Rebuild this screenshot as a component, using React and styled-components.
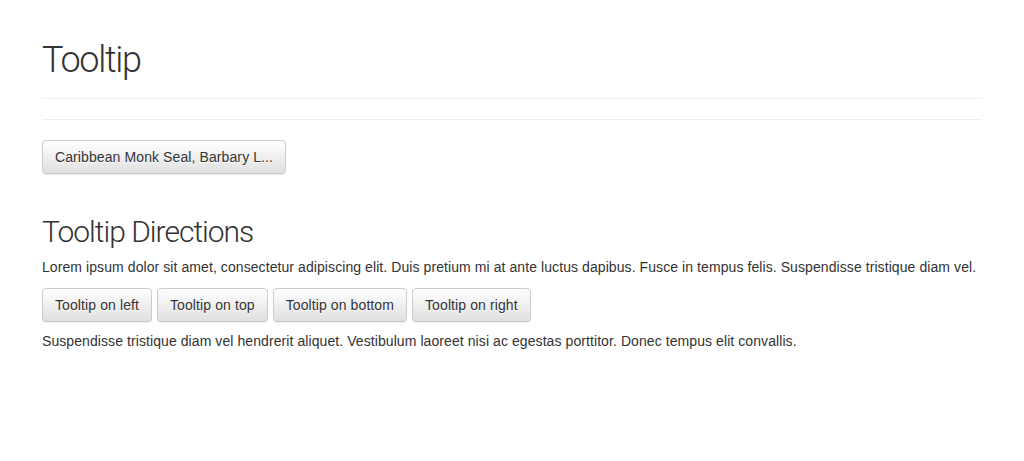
import React from 'react'
import styled, { createGlobalStyle } from 'styled-components'

const GlobalStyle = createGlobalStyle`
  html, body {
    margin: 0;
    background: #fff;
  }
  body {
    font-family: "Liberation Sans", Arial, sans-serif;
    font-size: 14px;
    line-height: 1.42857;
    letter-spacing: 0.08px;
    color: #333;
  }
`

const Container = styled.div`
  padding: 0 42px;
`

const PageHeader = styled.div`
  margin-top: 41px;
  padding-bottom: 17px;
  border-bottom: 1px solid #eee;
`

const Title = styled.h1`
  margin: 0;
  font-family: Roboto, "Liberation Sans", sans-serif;
  font-weight: 300;
  font-size: 36px;
  line-height: 1.1;
  letter-spacing: -1.3px;
  color: #333;
`

const Rule = styled.hr`
  margin: 20px 0;
  border: 0;
  border-top: 1px solid #eee;
`

const SubTitle = styled.h2`
  margin: ${props => props.top || 0}px 0 10px;
  font-family: Roboto, "Liberation Sans", sans-serif;
  font-weight: 300;
  font-size: 30px;
  line-height: 1.1;
  letter-spacing: -1px;
  color: #333;
`

const Text = styled.p`
  margin: 0 0 10px;
`

const ButtonRow = styled.div`
  display: flex;
  gap: 5px;
  margin-bottom: 10px;
`

const Button = styled.button`
  display: inline-block;
  box-sizing: border-box;
  height: 34px;
  padding: 6px 12px;
  font-family: "Liberation Sans", Arial, sans-serif;
  font-size: 14px;
  line-height: 20px;
  letter-spacing: 0.1px;
  color: #333;
  text-shadow: 0 1px 0 #fff;
  background-image: linear-gradient(to bottom, #fff 0, #e0e0e0 100%);
  border: 1px solid #ccc;
  border-radius: 4px;
  box-shadow: inset 0 1px 0 rgba(255, 255, 255, .15), 0 1px 1px rgba(0, 0, 0, .075);
  cursor: pointer;
  white-space: nowrap;
`

const directions = ['left', 'top', 'bottom', 'right']

const App = () => (
  <Container>
    <GlobalStyle />
    <PageHeader>
      <Title>Tooltip</Title>
    </PageHeader>
    <Rule />
    <Button title='Caribbean Monk Seal, Barbary Lion, Bali Tiger'>Caribbean Monk Seal, Barbary L...</Button>

    <SubTitle top={41}>Tooltip Directions</SubTitle>
    <Text>
      Lorem ipsum dolor sit amet, consectetur adipiscing elit. Duis pretium mi at ante luctus dapibus. Fusce in tempus felis. Suspendisse tristique diam vel.
    </Text>
    <ButtonRow>
      {directions.map(dir => (
        <Button key={dir} title={`Tooltip on ${dir}`}>Tooltip on {dir}</Button>
      ))}
    </ButtonRow>
    <Text>
      Suspendisse tristique diam vel hendrerit aliquet. Vestibulum laoreet nisi ac egestas porttitor. Donec tempus elit convallis.
    </Text>
  </Container>
)

export default App
